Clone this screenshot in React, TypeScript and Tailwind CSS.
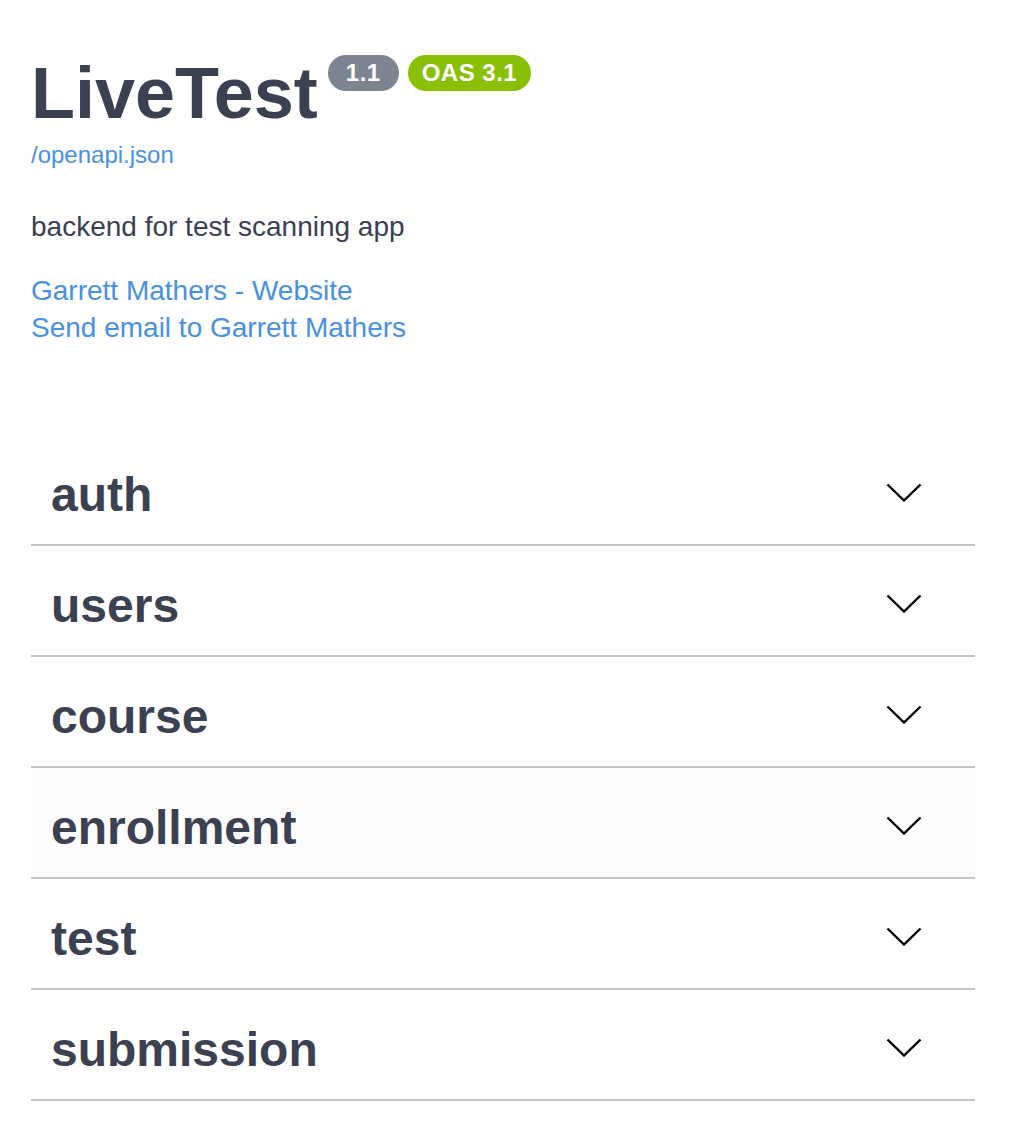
import React from "react";

const tags = ["auth", "users", "course", "enrollment", "test", "submission"];

function Chevron() {
  return (
    <svg width="36" height="19" viewBox="0 0 36 19" className="shrink-0 mt-[48px] mr-[53px]" aria-hidden="true">
      <polyline points="1.5,1.5 18,17.5 34.5,1.5" fill="none" stroke="#000" strokeWidth="2.4" />
    </svg>
  );
}

export default function App() {
  return (
    <div className="min-h-[1145px] bg-white font-['Liberation_Sans',Arial,sans-serif] text-[#3b4151]">
      <div className="pl-[31px] pt-[54px]">
        <div className="flex items-start">
          <h2 className="mt-[3px] text-[72px] leading-[72px] font-bold text-[#3b4151]">LiveTest</h2>
          <div className="ml-[10px] mt-[1px] flex gap-[9px]">
            <span className="flex h-[36px] items-center rounded-full bg-[#7d8492] px-[18px] text-[24px] font-bold tracking-[0.5px] text-white">
              1.1
            </span>
            <span className="flex h-[36px] items-center rounded-full bg-[#89bf04] px-[14px] text-[24px] font-bold tracking-[0.5px] text-white">
              OAS 3.1
            </span>
          </div>
        </div>
        <a className="mt-[14px] block text-[24px] leading-[24px] text-[#4990e2]">/openapi.json</a>
        <p className="mt-[46px] text-[28px] leading-[28px] text-[#3b4151]">backend for test scanning app</p>
        <div className="mt-[31px] flex flex-col items-start text-[28px] leading-[37px] text-[#4990e2]">
          <a>Garrett Mathers - Website</a>
          <a>Send email to Garrett Mathers</a>
        </div>
      </div>
      <div className="ml-[31px] mt-[89px] w-[944px]">
        {tags.map((t) => (
          <div
            key={t}
            className={
              "flex h-[111px] items-start justify-between border-b-2 border-[#c4c6cb] " +
              (t === "enrollment" ? "bg-[#fcfcfc]" : "bg-white")
            }
          >
            <span className="mt-[36px] pl-[20px] text-[48px] leading-[48px] font-bold text-[#3b4151]">{t}</span>
            <Chevron />
          </div>
        ))}
      </div>
    </div>
  );
}
